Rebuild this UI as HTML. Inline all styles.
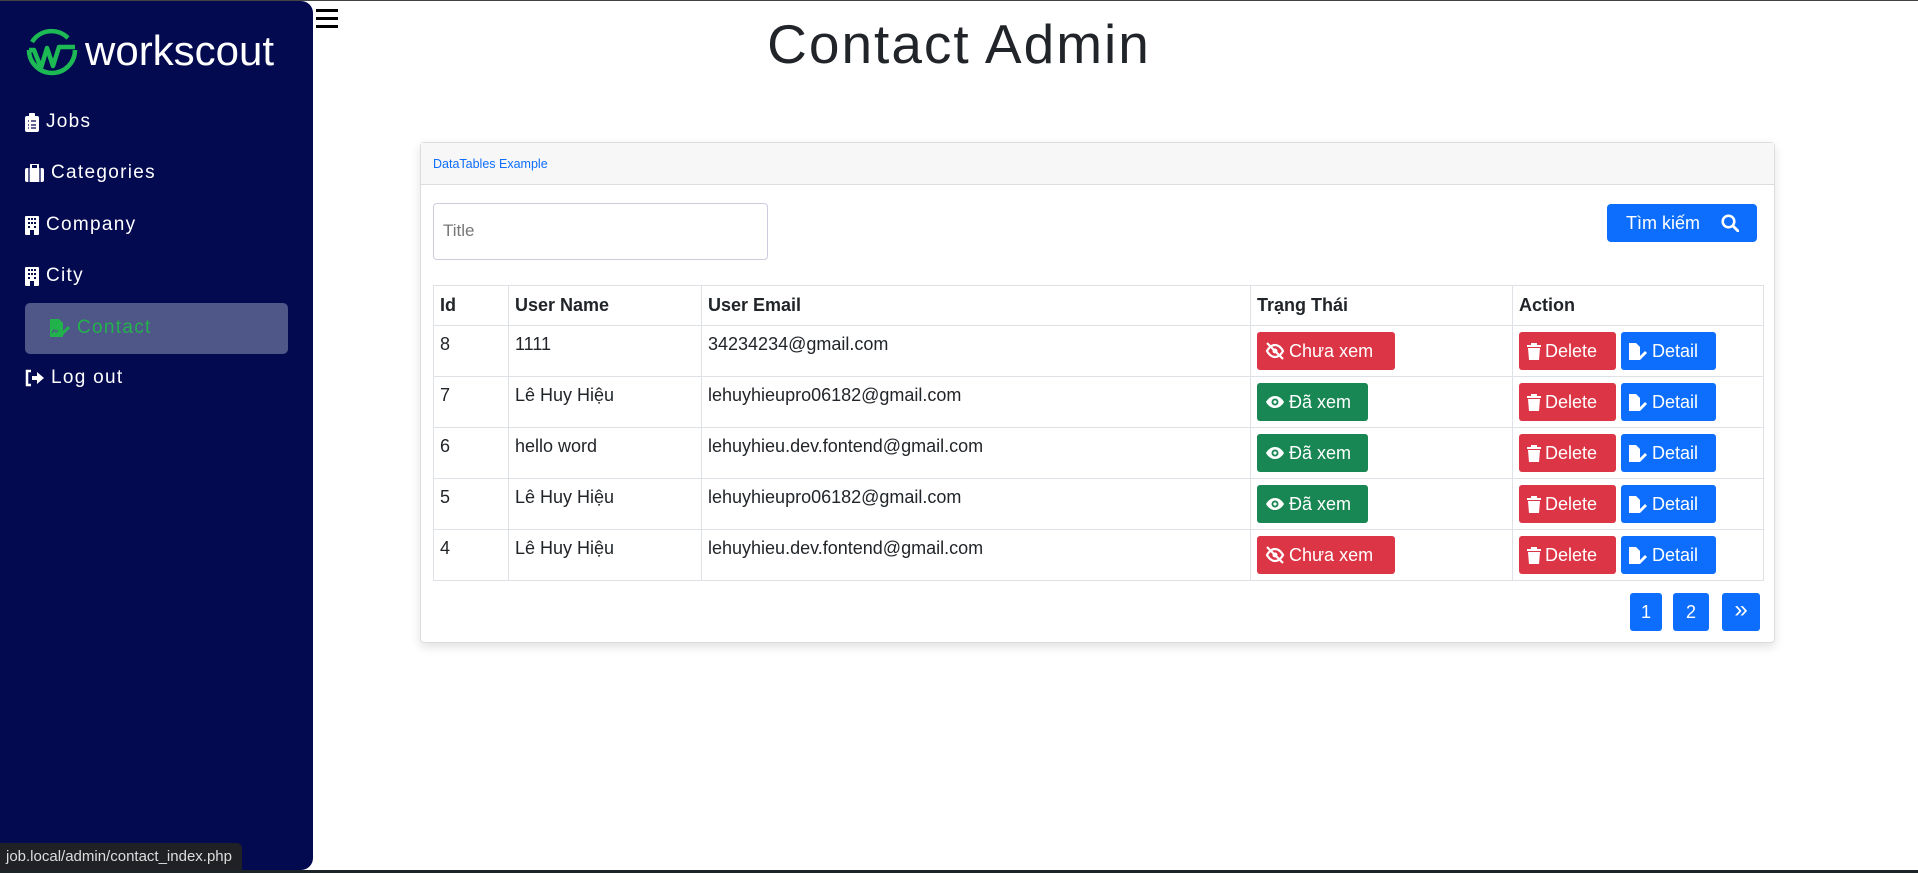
<!DOCTYPE html>
<html><head><meta charset="utf-8"><style>
*{box-sizing:border-box;margin:0;padding:0}
body{width:1918px;height:873px;overflow:hidden;background:#fff;font-family:"Liberation Sans",sans-serif;position:relative;color:#212529}
.topline{position:absolute;left:0;top:0;width:1918px;height:1px;background:#444}
.side{position:absolute;left:0;top:1px;width:313px;height:869px;background:#030a50;border-radius:0 12px 12px 0}
.logo{position:absolute;left:25px;top:27px}
.brand{position:absolute;left:85px;top:26px;color:#fff;font-size:42px;letter-spacing:0px}
.mi{position:absolute;left:25px;color:#fff;font-size:19px;letter-spacing:1.3px;display:flex;align-items:center;gap:7px}
.mi svg{flex:none}
.active{position:absolute;left:25px;top:302px;width:263px;height:51px;background:#4f5788;border-radius:5px}
.status{position:absolute;left:0;top:843px;width:242px;height:27px;background:#202124;border-radius:0 5px 0 0;color:#ddd;font-size:15px;padding:5px 0 0 6px}
.bottom{position:absolute;left:0;top:870px;width:1918px;height:3px;background:#1c2428}
.ham{position:absolute;left:316px;top:9px;width:22px}
.ham i{display:block;height:3px;background:#000;margin-bottom:5px}
h1{position:absolute;left:0;width:1918px;text-align:center;top:12px;font-weight:normal;font-size:55px;color:#212529;letter-spacing:2px}
.card{position:absolute;left:420px;top:142px;width:1355px;height:501px;border:1px solid #ddd;border-radius:4px;box-shadow:0 4px 10px rgba(0,0,0,.12);background:#fff}
.ch{height:42px;background:#f7f7f7;border-bottom:1px solid #ddd;color:#0d6efd;font-size:12.5px;padding:14px 0 0 12px}
.inp{position:absolute;left:12px;top:60px;width:335px;height:57px;border:1px solid #ccd;border-radius:4px;color:#777;font-size:17px;padding:17px 0 0 9px}
.sbtn{position:absolute;left:1186px;top:61px;width:150px;height:38px;background:#0d6efd;border-radius:4px;color:#fff;font-size:18px;padding:9px 0 0 19px}
table{position:absolute;left:12px;top:142px;border-collapse:collapse;font-size:18px}
td,th{border:1px solid #dee2e6;text-align:left;vertical-align:top;padding:0 6px}
th{height:40px;font-size:18px;padding-top:9px}
td{height:51px;padding-top:8px}
.b{display:inline-flex;align-items:center;gap:4px;color:#fff;border-radius:3px;height:38px;padding:0 8px;font-size:18px;margin-top:-2px;vertical-align:top}
.r{background:#dc3545}.g{background:#198754}.bl{background:#0d6efd}
.pg{position:absolute;top:450px;height:38px;background:#0d6efd;color:#fff;font-size:18px;text-align:center;line-height:38px;border-radius:3px}
</style></head><body>
<div class="topline"></div>
<div class="side">
<svg class="logo" width="54" height="54" viewBox="0 0 54 54"><path d="M4 22 A23 23 0 1 0 50 22" fill="none" stroke="#1db954" stroke-width="4.5"/><path d="M7 14 A23 23 0 0 1 43 10" fill="none" stroke="#1db954" stroke-width="4.5"/><path d="M4 22 H9 L16 40 L22 20 L28 38 L34 19 H50" fill="none" stroke="#1db954" stroke-width="4.5" stroke-linejoin="round"/></svg>
<div class="brand">workscout</div>
<div class="mi" style="top:110px"><svg width="14" height="19" viewBox="0 0 14 19"><rect x="0" y="3" width="14" height="16" rx="2" fill="#fff"/><rect x="4" y="0" width="6" height="5" rx="1" fill="#fff"/><path d="M3 8h1M6 8h5M3 12h1M6 12h5M3 15h1M6 15h5" stroke="#030a50" stroke-width="1.3"/></svg>Jobs</div>
<div class="mi" style="top:161px"><svg width="19" height="18" viewBox="0 0 19 18"><rect x="0" y="4" width="19" height="14" rx="2" fill="#fff"/><rect x="6" y="0" width="7" height="5" rx="1" fill="none" stroke="#fff" stroke-width="2"/><path d="M4 4v14M15 4v14" stroke="#030a50" stroke-width="1.3"/></svg>Categories</div>
<div class="mi" style="top:213px"><svg width="14" height="19" viewBox="0 0 14 19"><rect width="14" height="19" rx="1" fill="#fff"/><path d="M3 3h2M6 3h2M9 3h2M3 7h2M6 7h2M9 7h2M3 11h2M9 11h2" stroke="#030a50" stroke-width="2"/><rect x="5" y="14" width="4" height="5" fill="#030a50"/></svg>Company</div>
<div class="mi" style="top:264px"><svg width="14" height="19" viewBox="0 0 14 19"><rect width="14" height="19" rx="1" fill="#fff"/><path d="M3 3h2M6 3h2M9 3h2M3 7h2M6 7h2M9 7h2M3 11h2M9 11h2" stroke="#030a50" stroke-width="2"/><rect x="5" y="14" width="4" height="5" fill="#030a50"/></svg>City</div>
<div class="active"></div>
<div class="mi" style="top:316px;left:50px;color:#22b24c"><svg width="20" height="18" viewBox="0 0 20 18"><path d="M0 0h9l4 4v14H0z" fill="#22b24c"/><path d="M9 16l9-9 2 2-9 9h-2z" fill="#22b24c"/><path d="M2 14l2-3 2 2 2-2" stroke="#4f5788" stroke-width="1.2" fill="none"/></svg>Contact</div>
<div class="mi" style="top:366px"><svg width="19" height="18" viewBox="0 0 19 18"><path d="M6 2H2v14h4" stroke="#fff" stroke-width="2.5" fill="none"/><path d="M7 7h5V3l7 6-7 6v-4H7z" fill="#fff"/></svg>Log out</div>
</div>
<div class="ham"><i></i><i></i><i></i></div>
<h1>Contact Admin</h1>
<div class="card">
<div class="ch">DataTables Example</div>
<div class="inp">Title</div>
<div class="sbtn">Tìm kiếm <svg style="position:absolute;left:114px;top:10px" width="18" height="18" viewBox="0 0 18 18"><circle cx="7.5" cy="7.5" r="5.8" stroke="#fff" stroke-width="2.5" fill="none"/><path d="M12 12l5 5" stroke="#fff" stroke-width="2.8" stroke-linecap="round"/></svg></div>
<table>
<tr><th style="width:75px">Id</th><th style="width:193px">User Name</th><th style="width:549px">User Email</th><th style="width:262px">Trạng Thái</th><th style="width:251px">Action</th></tr>
<tr><td>8</td><td>1111</td><td>34234234@gmail.com</td><td><span class="b r" style="width:138px"><svg width="20" height="18" viewBox="0 0 20 18"><path d="M2 9s3-6 8-6 8 6 8 6-3 6-8 6-8-6-8-6z" stroke="#fff" stroke-width="2.2" fill="none"/><circle cx="10" cy="9" r="2.5" fill="#fff"/><path d="M2 1l16 16" stroke="#fff" stroke-width="2.2"/></svg>Chưa xem</span></td><td><span class="b r" style="width:97px"><svg width="14" height="17" viewBox="0 0 14 17"><path d="M0 2h14v2H0zM4 0h6v2H4zM1 5h12l-1 12H2z" fill="#fff"/></svg>Delete</span> <span class="b bl" style="width:95px"><svg width="19" height="17" viewBox="0 0 19 17"><path d="M0 0h7l4 4v13H0z" fill="#fff"/><path d="M9 15l7-7 2 2-7 7H9z" fill="#fff"/></svg>Detail</span></td></tr>
<tr><td>7</td><td>Lê Huy Hiệu</td><td>lehuyhieupro06182@gmail.com</td><td><span class="b g" style="width:111px"><svg width="20" height="16" viewBox="0 0 20 16"><path d="M1 8s3-6 9-6 9 6 9 6-3 6-9 6-9-6-9-6z" fill="#fff"/><circle cx="10" cy="8" r="3.5" fill="#198754"/><circle cx="10" cy="8" r="1.6" fill="#fff"/></svg>Đã xem</span></td><td><span class="b r" style="width:97px"><svg width="14" height="17" viewBox="0 0 14 17"><path d="M0 2h14v2H0zM4 0h6v2H4zM1 5h12l-1 12H2z" fill="#fff"/></svg>Delete</span> <span class="b bl" style="width:95px"><svg width="19" height="17" viewBox="0 0 19 17"><path d="M0 0h7l4 4v13H0z" fill="#fff"/><path d="M9 15l7-7 2 2-7 7H9z" fill="#fff"/></svg>Detail</span></td></tr>
<tr><td>6</td><td>hello word</td><td>lehuyhieu.dev.fontend@gmail.com</td><td><span class="b g" style="width:111px"><svg width="20" height="16" viewBox="0 0 20 16"><path d="M1 8s3-6 9-6 9 6 9 6-3 6-9 6-9-6-9-6z" fill="#fff"/><circle cx="10" cy="8" r="3.5" fill="#198754"/><circle cx="10" cy="8" r="1.6" fill="#fff"/></svg>Đã xem</span></td><td><span class="b r" style="width:97px"><svg width="14" height="17" viewBox="0 0 14 17"><path d="M0 2h14v2H0zM4 0h6v2H4zM1 5h12l-1 12H2z" fill="#fff"/></svg>Delete</span> <span class="b bl" style="width:95px"><svg width="19" height="17" viewBox="0 0 19 17"><path d="M0 0h7l4 4v13H0z" fill="#fff"/><path d="M9 15l7-7 2 2-7 7H9z" fill="#fff"/></svg>Detail</span></td></tr>
<tr><td>5</td><td>Lê Huy Hiệu</td><td>lehuyhieupro06182@gmail.com</td><td><span class="b g" style="width:111px"><svg width="20" height="16" viewBox="0 0 20 16"><path d="M1 8s3-6 9-6 9 6 9 6-3 6-9 6-9-6-9-6z" fill="#fff"/><circle cx="10" cy="8" r="3.5" fill="#198754"/><circle cx="10" cy="8" r="1.6" fill="#fff"/></svg>Đã xem</span></td><td><span class="b r" style="width:97px"><svg width="14" height="17" viewBox="0 0 14 17"><path d="M0 2h14v2H0zM4 0h6v2H4zM1 5h12l-1 12H2z" fill="#fff"/></svg>Delete</span> <span class="b bl" style="width:95px"><svg width="19" height="17" viewBox="0 0 19 17"><path d="M0 0h7l4 4v13H0z" fill="#fff"/><path d="M9 15l7-7 2 2-7 7H9z" fill="#fff"/></svg>Detail</span></td></tr>
<tr><td>4</td><td>Lê Huy Hiệu</td><td>lehuyhieu.dev.fontend@gmail.com</td><td><span class="b r" style="width:138px"><svg width="20" height="18" viewBox="0 0 20 18"><path d="M2 9s3-6 8-6 8 6 8 6-3 6-8 6-8-6-8-6z" stroke="#fff" stroke-width="2.2" fill="none"/><circle cx="10" cy="9" r="2.5" fill="#fff"/><path d="M2 1l16 16" stroke="#fff" stroke-width="2.2"/></svg>Chưa xem</span></td><td><span class="b r" style="width:97px"><svg width="14" height="17" viewBox="0 0 14 17"><path d="M0 2h14v2H0zM4 0h6v2H4zM1 5h12l-1 12H2z" fill="#fff"/></svg>Delete</span> <span class="b bl" style="width:95px"><svg width="19" height="17" viewBox="0 0 19 17"><path d="M0 0h7l4 4v13H0z" fill="#fff"/><path d="M9 15l7-7 2 2-7 7H9z" fill="#fff"/></svg>Detail</span></td></tr>
</table>
<div class="pg" style="left:1209px;width:32px">1</div>
<div class="pg" style="left:1252px;width:36px">2</div>
<div class="pg" style="left:1301px;width:38px;font-size:24px;line-height:34px">»</div>
</div>
<div class="status">job.local/admin/contact_index.php</div>
<div class="bottom"></div>
</body></html>
